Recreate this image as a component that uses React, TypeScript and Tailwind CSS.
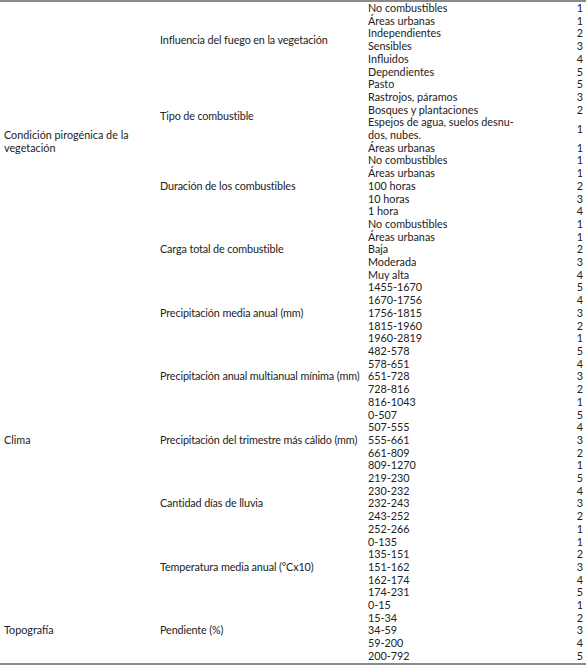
const groups = [
  {
    category: 'Condición pirogénica de la vegetación',
    vars: [
      {
        name: 'Influencia del fuego en la vegetación',
        rows: [
          ['No combustibles', '1'],
          ['Áreas urbanas', '1'],
          ['Independientes', '2'],
          ['Sensibles', '3'],
          ['Influidos', '4'],
          ['Dependientes', '5'],
        ],
      },
      {
        name: 'Tipo de combustible',
        rows: [
          ['Pasto', '5'],
          ['Rastrojos, páramos', '3'],
          ['Bosques y plantaciones', '2'],
          ['Espejos de agua, suelos desnu-\ndos, nubes.', '1'],
          ['Áreas urbanas', '1'],
        ],
      },
      {
        name: 'Duración de los combustibles',
        rows: [
          ['No combustibles', '1'],
          ['Áreas urbanas', '1'],
          ['100 horas', '2'],
          ['10 horas', '3'],
          ['1 hora', '4'],
        ],
      },
      {
        name: 'Carga total de combustible',
        rows: [
          ['No combustibles', '1'],
          ['Áreas urbanas', '1'],
          ['Baja', '2'],
          ['Moderada', '3'],
          ['Muy alta', '4'],
        ],
      },
    ],
  },
  {
    category: 'Clima',
    vars: [
      {
        name: 'Precipitación media anual (mm)',
        rows: [
          ['1455-1670', '5'],
          ['1670-1756', '4'],
          ['1756-1815', '3'],
          ['1815-1960', '2'],
          ['1960-2819', '1'],
        ],
      },
      {
        name: 'Precipitación anual multianual mínima (mm)',
        rows: [
          ['482-578', '5'],
          ['578-651', '4'],
          ['651-728', '3'],
          ['728-816', '2'],
          ['816-1043', '1'],
        ],
      },
      {
        name: 'Precipitación del trimestre más cálido (mm)',
        rows: [
          ['0-507', '5'],
          ['507-555', '4'],
          ['555-661', '3'],
          ['661-809', '2'],
          ['809-1270', '1'],
        ],
      },
      {
        name: 'Cantidad días de lluvia',
        rows: [
          ['219-230', '5'],
          ['230-232', '4'],
          ['232-243', '3'],
          ['243-252', '2'],
          ['252-266', '1'],
        ],
      },
      {
        name: 'Temperatura media anual (°Cx10)',
        rows: [
          ['0-135', '1'],
          ['135-151', '2'],
          ['151-162', '3'],
          ['162-174', '4'],
          ['174-231', '5'],
        ],
      },
    ],
  },
  {
    category: 'Topografía',
    vars: [
      {
        name: 'Pendiente (%)',
        rows: [
          ['0-15', '1'],
          ['15-34', '2'],
          ['34-59', '3'],
          ['59-200', '4'],
          ['200-792', '5'],
        ],
      },
    ],
  },
];

export default function App() {
  return (
    <div className="w-[586px] h-[668px] bg-white text-[#222] text-[10.8px] leading-[12.7px] font-['Lato','Open_Sans',sans-serif]">
      <table className="w-[586px] table-fixed border-collapse border-t-2 border-b-2 border-[#8a8a8a]">
        <colgroup>
          <col className="w-[158px]" />
          <col className="w-[210px]" />
          <col className="w-[190px]" />
          <col className="w-[28px]" />
        </colgroup>
        <tbody>
          {groups.map((g) => {
            const total = g.vars.reduce((n, v) => n + v.rows.length, 0);
            return g.vars.map((v, vi) =>
              v.rows.map(([label, value], ri) => (
                <tr key={g.category + v.name + label}>
                  {vi === 0 && ri === 0 && (
                    <td rowSpan={total} className="align-middle p-0 pl-[4px] pr-[4px]">
                      {g.category}
                    </td>
                  )}
                  {ri === 0 && (
                    <td rowSpan={v.rows.length} className="align-middle p-0 pl-[2px] whitespace-nowrap tracking-[-0.12px]">
                      {v.name}
                    </td>
                  )}
                  <td className="align-middle p-0 whitespace-pre-line">{label}</td>
                  <td className="align-middle p-0 pr-[3px] text-right">{value}</td>
                </tr>
              ))
            );
          })}
        </tbody>
      </table>
    </div>
  );
}
